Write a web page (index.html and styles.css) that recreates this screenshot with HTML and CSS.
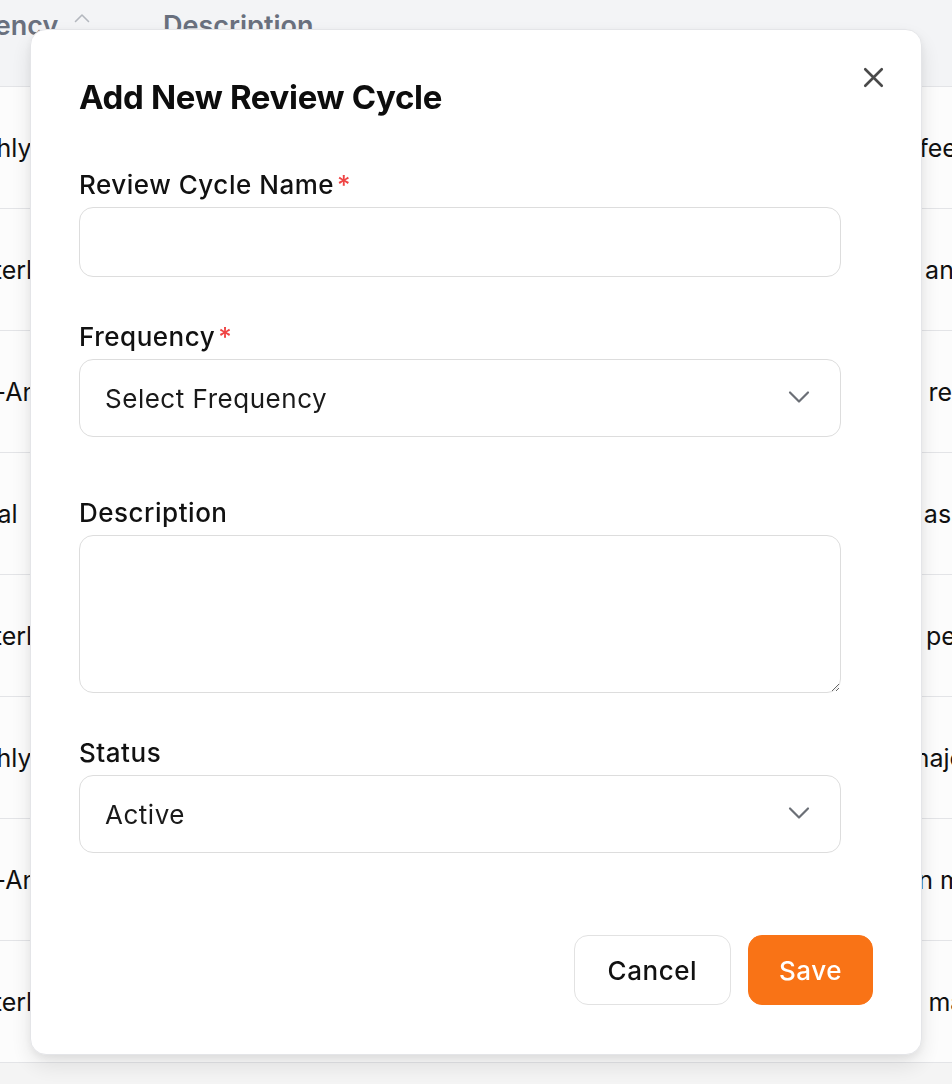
FILE: index.html
```html
<!DOCTYPE html>
<html lang="en">
<head>
<meta charset="utf-8">
<title>Add New Review Cycle</title>
<link rel="stylesheet" href="styles.css">
</head>
<body>
<div class="page">
  <div class="table">
    <div class="row row--head">
      <div class="cell cell--freq cell--head-freq">
        <span>Frequency</span>
        <svg class="sort-caret" width="16" height="10" viewBox="0 0 16 10" aria-hidden="true"><path d="M1.5 8.5 8 2l6.5 6.5" fill="none" stroke="currentColor" stroke-width="1.6" stroke-linecap="round" stroke-linejoin="round"/></svg>
      </div>
      <div class="cell cell--desc">Description</div>
    </div>
    <div class="row"><div class="cell cell--freq">Monthly</div><div class="cell cell--desc">Monthly one-on-one check-ins with managers for quick regular feedback</div></div>
    <div class="row"><div class="cell cell--freq">Quarterly</div><div class="cell cell--desc">Quarterly review of goals, objectives and key results against the annual plan</div></div>
    <div class="row"><div class="cell cell--freq">Semi-Annual</div><div class="cell cell--desc">Mid-year review of individual performance versus goals and key results</div></div>
    <div class="row"><div class="cell cell--freq">Annual</div><div class="cell cell--desc">Comprehensive annual evaluation of goals and key competency assessment</div></div>
    <div class="row"><div class="cell cell--freq">Quarterly</div><div class="cell cell--desc">Quarterly feedback from peers, direct reports and leads on their performance</div></div>
    <div class="row"><div class="cell cell--freq">Monthly</div><div class="cell cell--desc">Monthly sprint retrospective for product teams working across major releases</div></div>
    <div class="row"><div class="cell cell--freq">Semi-Annual</div><div class="cell cell--desc">Semi-annual reviews of employee development plans focused on mentoring</div></div>
    <div class="row"><div class="cell cell--freq">Quarterly</div><div class="cell cell--desc">Quarterly calibration session for leadership, directors and senior management</div></div>
  </div>
</div>

<div class="overlay">
  <div class="modal" role="dialog" aria-labelledby="modal-title">
    <button class="close" type="button" aria-label="Close">
      <svg width="33" height="33" viewBox="0 0 24 24" aria-hidden="true"><path d="M18 6 6 18M6 6l12 12" fill="none" stroke="currentColor" stroke-width="1.9" stroke-linecap="round"/></svg>
    </button>
    <h2 class="title" id="modal-title">Add New Review Cycle</h2>
    <form class="form">
      <div class="field">
        <label class="label" for="f-name">Review Cycle Name<span class="req">*</span></label>
        <input class="control control--input" id="f-name" type="text">
      </div>
      <div class="field field--extra">
        <label class="label" for="f-freq">Frequency<span class="req">*</span></label>
        <div class="select-wrap">
          <select class="control control--select" id="f-freq">
            <option>Select Frequency</option>
            <option>Monthly</option>
            <option>Quarterly</option>
            <option>Semi-Annual</option>
            <option>Annual</option>
          </select>
          <svg class="chev" width="36" height="36" viewBox="0 0 24 24" aria-hidden="true"><path d="m6 9 6 6 6-6" fill="none" stroke="currentColor" stroke-width="1.45" stroke-linecap="round" stroke-linejoin="round"/></svg>
        </div>
      </div>
      <div class="field">
        <label class="label" for="f-desc">Description</label>
        <textarea class="control control--textarea" id="f-desc"></textarea>
      </div>
      <div class="field">
        <label class="label" for="f-status">Status</label>
        <div class="select-wrap">
          <select class="control control--select" id="f-status">
            <option>Active</option>
            <option>Inactive</option>
          </select>
          <svg class="chev" width="36" height="36" viewBox="0 0 24 24" aria-hidden="true"><path d="m6 9 6 6 6-6" fill="none" stroke="currentColor" stroke-width="1.45" stroke-linecap="round" stroke-linejoin="round"/></svg>
        </div>
      </div>
      <div class="actions">
        <button class="btn btn--cancel" type="button">Cancel</button>
        <button class="btn btn--save" type="submit">Save</button>
      </div>
    </form>
  </div>
</div>
</body>
</html>
```

FILE: styles.css
```css
* { box-sizing: border-box; }

html, body {
  margin: 0;
  padding: 0;
}

body {
  background: #f7f7f7;
  font-family: Inter, "Noto Sans", "Liberation Sans", sans-serif;
  color: #111111;
  overflow: hidden;
  height: 1084px;
}

/* ---------- background table ---------- */
.page {
  width: 952px;
  overflow: hidden;
}

.table {
  margin-left: -64px;
  width: 1200px;
}

.row {
  display: grid;
  grid-template-columns: 227px 1fr;
  height: 122px;
  border-bottom: 1px solid #e6e7ea;
  background: #ffffff;
  align-items: center;
  font-size: 25px;
  line-height: 36px;
}

.row--head {
  height: 87px;
  background: #f6f7f9;
  align-items: start;
  padding-top: 8px;
  font-size: 27px;
  font-weight: 600;
  color: #6b7280;
}

.cell {
  white-space: nowrap;
  overflow: hidden;
}

.cell--freq {
  display: flex;
  align-items: center;
}

.cell--head-freq {
  margin-left: -16px;
}

.sort-caret {
  margin-left: 16px;
  margin-top: -16px;
  color: #b6bac1;
}

/* ---------- modal ---------- */
.overlay {
  position: fixed;
  inset: 0;
  display: flex;
  align-items: center;
  justify-content: center;
  background: rgba(0, 0, 0, 0.012);
}

.modal {
  position: relative;
  width: 892px;
  background: #ffffff;
  border: 1px solid #e4e5e8;
  border-radius: 16px;
  padding: 47px 48px 49px;
  box-shadow: 0 10px 24px rgba(0, 0, 0, 0.10), 0 3px 8px rgba(0, 0, 0, 0.06);
}

.close {
  position: absolute;
  top: 31px;
  right: 31px;
  width: 33px;
  height: 33px;
  padding: 0;
  border: 0;
  background: transparent;
  color: #4a4a4a;
  display: flex;
  align-items: center;
  justify-content: center;
  cursor: pointer;
}

.title {
  margin: 0;
  font-size: 33px;
  line-height: 40px;
  font-weight: 700;
  letter-spacing: -0.01em;
  color: #0d0d0d;
}

.form {
  margin-top: 50px;
  display: flex;
  flex-direction: column;
}

.field {
  display: flex;
  flex-direction: column;
  margin-right: 32px;
  margin-bottom: 42px;
}

.field--extra {
  margin-bottom: 58px;
}

.label {
  font-size: 26px;
  line-height: 36px;
  font-weight: 500;
  letter-spacing: 0.02em;
  color: #111111;
  margin-bottom: 4px;
}

.req {
  color: #ef4444;
  margin-left: 3px;
}

.control {
  width: 100%;
  border: 1px solid #dddddd;
  border-radius: 14px;
  background: #ffffff;
  font-family: inherit;
  font-size: 26px;
  letter-spacing: 0.02em;
  color: #1a1a1a;
  outline: none;
}

.control--input {
  height: 70px;
  padding: 0 24px;
}

.select-wrap {
  position: relative;
}

.control--select {
  height: 78px;
  padding: 0 60px 0 25px;
  appearance: none;
  -webkit-appearance: none;
}

.chev {
  position: absolute;
  right: 24px;
  top: 50%;
  margin-top: -19px;
  color: #6b6f76;
  pointer-events: none;
}

.control--textarea {
  height: 158px;
  padding: 16px 24px;
  resize: vertical;
  line-height: 1.4;
}

.actions {
  margin-top: 40px;
  display: flex;
  justify-content: flex-end;
  gap: 17px;
}

.btn {
  height: 70px;
  padding: 0 33px;
  border-radius: 14px;
  font-family: inherit;
  font-size: 26px;
  font-weight: 500;
  letter-spacing: 0.02em;
  cursor: pointer;
}

.btn--cancel {
  background: #ffffff;
  border: 1px solid #e2e2e2;
  color: #111111;
}

.btn--save {
  background: #f97316;
  border: 1px solid #f97316;
  color: #ffffff;
  padding: 0 30px;
}
```
